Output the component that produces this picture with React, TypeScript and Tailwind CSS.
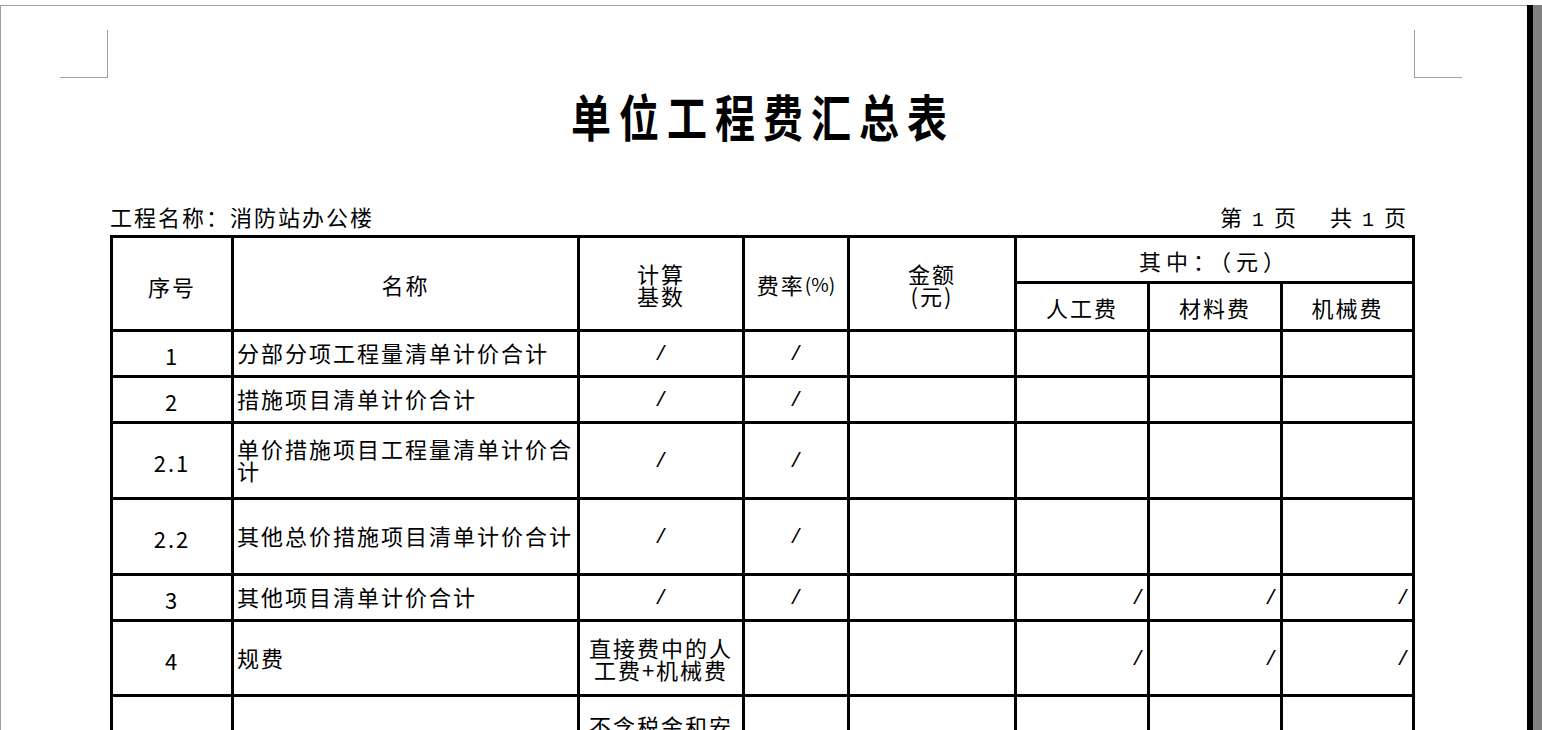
import React from "react";

const cjk = "font-['Noto_Sans_CJK_SC',sans-serif]";
const mono = "font-['Liberation_Mono','Noto_Sans_CJK_SC',monospace]";

type Row = {
  no: string;
  name: string;
  base: string;
  rate: string;
  sub: boolean;
  tall?: boolean;
};

const rows: Row[] = [
  { no: "1", name: "分部分项工程量清单计价合计", base: "/", rate: "/", sub: false },
  { no: "2", name: "措施项目清单计价合计", base: "/", rate: "/", sub: false },
  { no: "2.1", name: "单价措施项目工程量清单计价合计", base: "/", rate: "/", sub: false },
  { no: "2.2", name: "其他总价措施项目清单计价合计", base: "/", rate: "/", sub: false },
  { no: "3", name: "其他项目清单计价合计", base: "/", rate: "/", sub: true },
  { no: "4", name: "规费", base: "直接费中的人工费+机械费", rate: "", sub: true },
  { no: "", name: "", base: "不含税金和安全文明施工费的工程造价", rate: "", sub: false, tall: true },
];

function Cell({ children, className = "" }: { children?: React.ReactNode; className?: string }) {
  return (
    <div className={`bg-white flex text-black text-[22px] tracking-[2px] leading-[22px] ${cjk} ${className}`}>
      {children}
    </div>
  );
}

function Slash() {
  return <span className={`${mono} text-[20px] leading-[20px] tracking-normal pt-[3px]`}>/</span>;
}

export default function App() {
  return (
    <div className="w-[1542px] h-[730px] overflow-hidden bg-white pt-[5px] flex">
      <div className="w-[1527px] h-full border-t border-l border-[#a0a0a0] overflow-hidden">
        {/* crop marks */}
        <div className="mt-[24px] ml-[59px] flex gap-[1306px]">
          <div className="w-[48px] h-[48px] border-r border-b border-[#a0a0a0]" />
          <div className="w-[48px] h-[48px] border-l border-b border-[#a0a0a0]" />
        </div>

        <div className="ml-[109px] w-[1305px]">
          {/* title */}
          <div className="mt-[12px] flex justify-center">
            <div
              className={`${cjk} font-bold text-[50px] leading-[50px] tracking-[10px] scale-x-[0.8] whitespace-nowrap text-black`}
            >
              单位工程费汇总表
            </div>
          </div>

          {/* info row */}
          <div className={`mt-[65px] h-[22px] flex justify-between items-center pr-[9px] text-[22px] leading-[22px] text-black ${cjk}`}>
            <div className="tracking-[2px]">工程名称：消防站办公楼</div>
            <div className="flex gap-[34px] h-[22px]">
              <div className="flex items-baseline gap-[10px] h-[22px]">
                <span>第</span>
                <span className={`${mono} text-[20px] leading-[22px]`}>1</span>
                <span>页</span>
              </div>
              <div className="flex items-baseline gap-[10px] h-[22px]">
                <span>共</span>
                <span className={`${mono} text-[20px] leading-[22px]`}>1</span>
                <span>页</span>
              </div>
            </div>
          </div>

          {/* table */}
          <div className="mt-[8px] w-[1305px] bg-black p-[3px] grid gap-[3px] grid-cols-[118px_343px_162px_102px_164px_130px_130px_129px] grid-rows-[43px_45px_43px_43px_73px_73px_43px_72px_140px]">
            <Cell className="row-span-2 items-center justify-center pt-[4px]">序号</Cell>
            <Cell className="row-span-2 items-center justify-center">名称</Cell>
            <Cell className="row-span-2 items-center justify-center text-center leading-[21px]">
              <div>
                计算
                <br />
                基数
              </div>
            </Cell>
            <Cell className="row-span-2 items-center justify-center tracking-[1px]">
              费率<span className="text-[19px] tracking-[0px]">(%)</span>
            </Cell>
            <Cell className="row-span-2 items-center justify-center text-center leading-[21px]">
              <div>
                金额
                <br />
                (元)
              </div>
            </Cell>
            <Cell className="col-span-3 items-center justify-center tracking-[5px]">其中：（元）</Cell>
            <Cell className="items-center justify-center">人工费</Cell>
            <Cell className="items-center justify-center">材料费</Cell>
            <Cell className="items-center justify-center">机械费</Cell>

            {rows.map((r, i) => (
              <React.Fragment key={i}>
                <Cell className={`items-center justify-center pt-[3px] ${mono} text-[20px] tracking-[1px]`}>{r.no}</Cell>
                <Cell className="items-center pl-[3px] pr-[2px] pb-[3px]">
                  <div>{r.name}</div>
                </Cell>
                <Cell className={`justify-center text-center px-[2px] ${r.tall ? "items-start pt-[17px]" : "items-center"}`}>
                  {r.base === "/" ? <Slash /> : <div>{r.base}</div>}
                </Cell>
                <Cell className="items-center justify-center">{r.rate === "/" ? <Slash /> : null}</Cell>
                <Cell />
                <Cell className="items-center justify-end pr-[3px]">{r.sub ? <Slash /> : null}</Cell>
                <Cell className="items-center justify-end pr-[3px]">{r.sub ? <Slash /> : null}</Cell>
                <Cell className="items-center justify-end pr-[3px]">{r.sub ? <Slash /> : null}</Cell>
              </React.Fragment>
            ))}
          </div>
        </div>
      </div>
      <div className="w-[6px] h-full bg-black" />
      <div className="w-[9px] h-full bg-[#808080]" />
    </div>
  );
}
